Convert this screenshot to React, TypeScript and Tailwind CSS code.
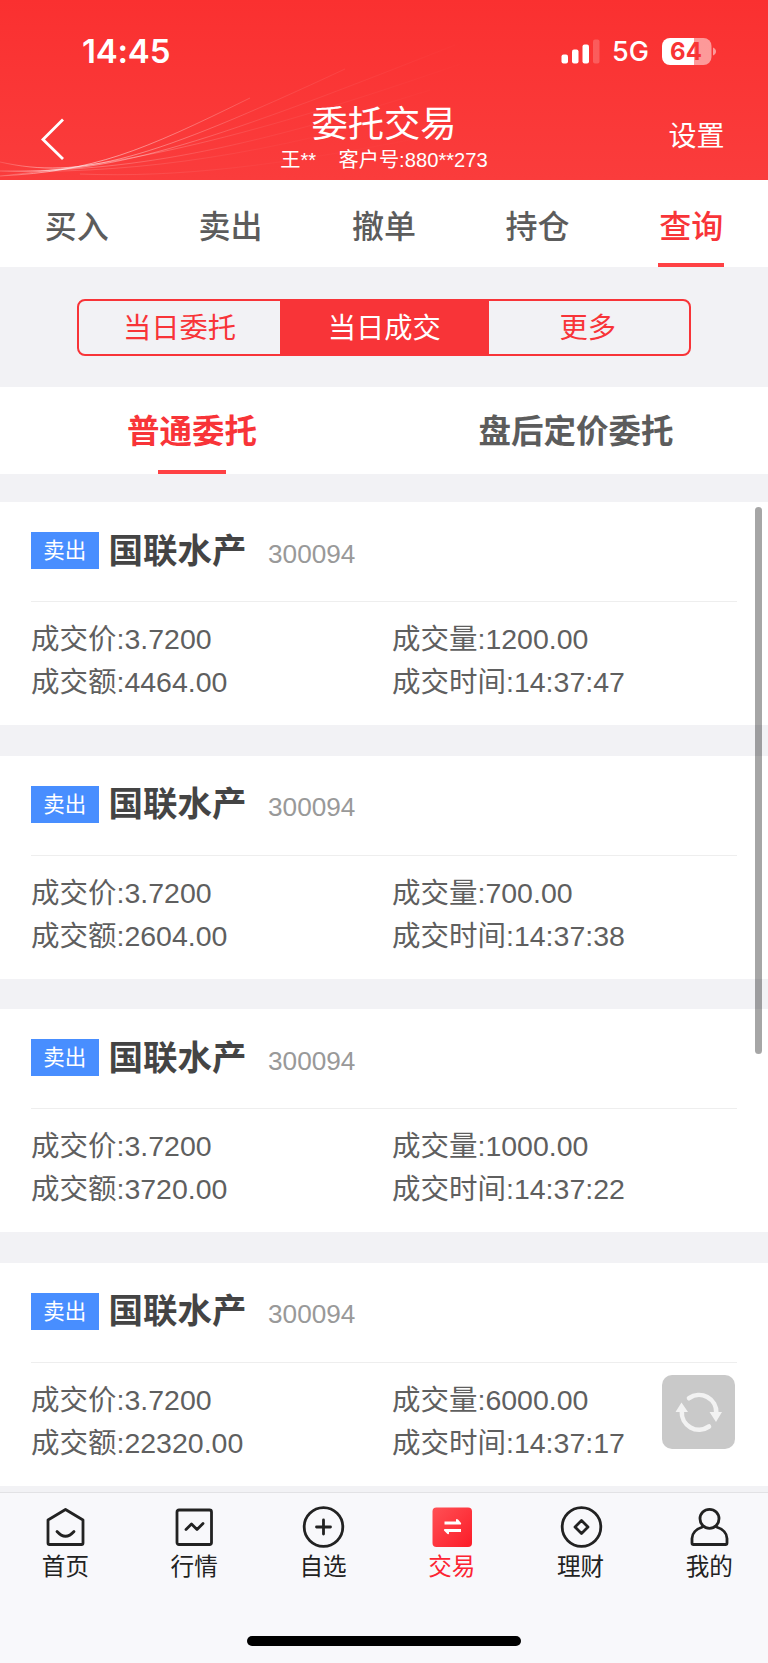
// App.tsx
import React from "react";

const tabs = ["买入", "卖出", "撤单", "持仓", "查询"];

const deals = [
  { price: "3.7200", volume: "1200.00", amount: "4464.00", time: "14:37:47" },
  { price: "3.7200", volume: "700.00", amount: "2604.00", time: "14:37:38" },
  { price: "3.7200", volume: "1000.00", amount: "3720.00", time: "14:37:22" },
  { price: "3.7200", volume: "6000.00", amount: "22320.00", time: "14:37:17" },
];

const StatusBar: React.FC = () => {
  return (
    <div className="h-[104px] pl-[82px] pr-[51px] flex items-center justify-between text-white font-[Inter,sans-serif]">
      <span className="-mt-px text-[33px] font-semibold leading-none tracking-[-0.2px]">14:45</span>
      <div className="-mt-px flex items-center">
        <svg className="w-[39px] h-[25px]" viewBox="0 0 39 25" fill="#fff">
          <rect x="0.5" y="15.5" width="6.5" height="9" rx="2" />
          <rect x="11" y="10.5" width="6.5" height="14" rx="2" />
          <rect x="21.5" y="5.5" width="6.5" height="19" rx="2" />
          <rect x="32" y="0.5" width="6.5" height="24" rx="2" fillOpacity="0.2" />
        </svg>
        <span className="ml-3 w-[38px] text-[27px] font-medium leading-[34px]">5G</span>
        <svg className="ml-[12px] w-[55px] h-[27px] overflow-visible" viewBox="0 0 55 27">
          <path d="M8 0h24v27H8a8 8 0 0 1-8-8V8a8 8 0 0 1 8-8z" fill="#fff" />
          <path d="M32 0h9.500a8 8 0 0 1 8 8v11a8 8 0 0 1-8 8H32z" fill="#fff" fillOpacity="0.5" />
          <path d="M51 9.500c4 1.500 4 6.500 0 8z" fill="#fff" fillOpacity="0.5" />
          <text x="24" y="22.300" textAnchor="middle" fontSize="24" fontWeight="700" fill="#f83434">64</text>
        </svg>
      </div>
    </div>
  );
};

const Header: React.FC = () => {
  return (
    <header className="relative h-[180px] bg-linear-to-b from-[#fa3030] to-[#fa3c3c] text-white">
      {/* Light trails behind the title */}
      <svg className="absolute left-0 top-0 w-[768px] h-[180px]" viewBox="0 0 768 180" fill="none">
        <defs>
          <linearGradient id="trail" gradientUnits="userSpaceOnUse" x1="0" y1="0" x2="480" y2="0">
            <stop offset="0" stopColor="#fff" stopOpacity="0.15" />
            <stop offset="0.12" stopColor="#fff" stopOpacity="0.6" />
            <stop offset="0.3" stopColor="#fff" stopOpacity="0.4" />
            <stop offset="0.55" stopColor="#fff" stopOpacity="0.12" />
            <stop offset="1" stopColor="#fff" stopOpacity="0" />
          </linearGradient>
        </defs>
        <g stroke="url(#trail)">
          <path d="M0 176C95 171 140 152 250 98" />
          <path d="M0 162C80 180 150 160 345 69" strokeOpacity="0.9" />
          <path d="M0 171C110 174 190 150 455 45" strokeOpacity="0.8" />
          <path d="M0 176C100 165 200 155 460 64" strokeOpacity="0.6" />
          <path d="M0 171C130 172 240 150 430 90" strokeOpacity="0.5" />
          <path d="M0 171C120 174 240 160 400 115" strokeOpacity="0.3" />
          <path d="M80 174C180 178 280 165 420 138" strokeOpacity="0.25" />
        </g>
      </svg>
      <div className="relative">
        <StatusBar />
        <div className="h-[76px] grid grid-cols-[1fr_auto_1fr]">
          <svg className="ml-[41px] mt-[14px] w-[24px] h-[42px]" viewBox="0 0 24 42" fill="none" stroke="#fff" strokeWidth="2.800">
            <path d="M22 1.500L2 21.500L22 41" />
          </svg>
          <div className="text-center whitespace-pre">
            <h1 className="mt-[1px] text-[36.300px] leading-[40px]">委托交易</h1>
            <p className="mt-[3px] text-[20.200px] leading-[24px]">王**    客户号:880**273</p>
          </div>
          <span className="justify-self-end mr-[43.500px] mt-[13px] text-[28px] leading-[40px]">设置</span>
        </div>
      </div>
    </header>
  );
};

const DealCard: React.FC<{ deal: (typeof deals)[number] }> = ({ deal }) => {
  return (
    <section className="h-[223px] bg-white px-[31px]">
      <div className="h-[99px] flex items-center">
        <span className="-mt-[2px] w-[67.500px] h-[37px] bg-[#488eff] text-white text-[21.500px] leading-[38px] text-center">卖出</span>
        <span className="ml-[10px] text-[34.500px] font-bold text-[#444]">国联水产</span>
        <span className="ml-[21.500px] mt-[6px] text-[26.200px] text-[#999]">300094</span>
      </div>
      <div className="border-t border-[#eee] pt-[16px] grid grid-cols-[361px_1fr] text-[28.500px] leading-[43px] text-[#5f5f5f]">
        <span>成交价:{deal.price}</span>
        <span>成交量:{deal.volume}</span>
        <span>成交额:{deal.amount}</span>
        <span>成交时间:{deal.time}</span>
      </div>
    </section>
  );
};

const stroke = { fill: "none", stroke: "#222", strokeWidth: 2.8, strokeLinecap: "round", strokeLinejoin: "round" } as const;

const navItems = [
  {
    label: "首页",
    icon: (
      <g {...stroke}>
        <path d="M22.500 3.500L40 14V37a1.500 1.500 0 0 1-1.500 1.500H6.500a1.500 1.500 0 0 1-1.500-1.500V14z" />
        <path d="M14 25.500Q22.500 35 31 25.500" />
      </g>
    ),
  },
  {
    label: "行情",
    icon: (
      <g {...stroke}>
        <rect x="5" y="4" width="34.500" height="34.500" rx="2" />
        <path d="M14 23.500L19.500 18L25 23.500L31 17.500" />
      </g>
    ),
  },
  {
    label: "自选",
    icon: (
      <g {...stroke}>
        <circle cx="22.500" cy="21" r="19.300" />
        <path d="M15.500 21H29.500M22.500 14V28" />
      </g>
    ),
  },
  {
    label: "交易",
    active: true,
    icon: (
      <g>
        <defs>
          <linearGradient id="trade" x1="0" y1="0" x2="1" y2="1">
            <stop offset="0" stopColor="#ff5055" />
            <stop offset="1" stopColor="#fc1c28" />
          </linearGradient>
        </defs>
        <rect x="2.500" y="1.500" width="39.500" height="39.500" rx="4" fill="url(#trade)" />
        <path
          d="M14.500 15.500H26V13.500Q26.500 12.500 28 13.500L31 17Q31.500 18.500 30 18.500H14.500zM31 23H15Q13 23.500 14.500 25L17.500 28Q19 28.500 19 27.500V26H31z"
          fill="#fff"
        />
      </g>
    ),
  },
  {
    label: "理财",
    icon: (
      <g {...stroke}>
        <circle cx="22.500" cy="21" r="19.300" />
        <path d="M22.500 14.500L29 21L22.500 27.500L16 21z" />
      </g>
    ),
  },
  {
    label: "我的",
    icon: (
      <g {...stroke}>
        <circle cx="22.500" cy="12.800" r="9.500" />
        <path d="M15.500 21C9 23 5 27.500 5 32.500V37a1.500 1.500 0 0 0 1.500 1.500H38.500a1.500 1.500 0 0 0 1.500-1.500V32.500C40 27.500 36 23 29.500 21" />
      </g>
    ),
  },
];

const App: React.FC = () => {
  return (
    <div className="relative w-[768px] h-[1663px] overflow-hidden bg-[#f2f2f5] font-['Liberation_Sans','Noto_Sans_CJK_SC',sans-serif]">
      <Header />

      {/* Main tabs */}
      <nav className="h-[87px] bg-white grid grid-cols-5 text-[32px] font-medium text-[#5c5c5c]">
        {tabs.map((tab) => (
          <div key={tab} className={tab === "查询" ? "flex flex-col items-center text-[#f83438]" : "flex flex-col items-center"}>
            <span className="h-[83px] leading-[95px]">{tab}</span>
            {tab === "查询" && <span className="w-[66px] h-[4px] bg-[#ff4144]" />}
          </div>
        ))}
      </nav>

      {/* Segmented filter */}
      <div className="h-[120px] px-[77px] pt-[32px]">
        <div className="h-[57px] grid grid-cols-[201px_208.500px_1fr] border-2 border-[#f83438] rounded-lg text-[28.300px] leading-[54px] text-center text-[#f83438]">
          <span>当日委托</span>
          <span className="h-[53px] bg-[#f83438] text-white">当日成交</span>
          <span className="pr-[2px]">更多</span>
        </div>
      </div>

      {/* Order type */}
      <div className="h-[87px] bg-white grid grid-cols-2 text-[32.500px] font-bold text-[#5c5c5c]">
        <div className="flex flex-col items-center text-[#f83438]">
          <span className="h-[83px] leading-[90px]">普通委托</span>
          <span className="w-[68px] h-[4px] bg-[#ff4144]" />
        </div>
        <div className="h-[87px] text-center leading-[90px]">盘后定价委托</div>
      </div>

      <main className="mt-[28px] flex flex-col gap-[30.500px]">
        {deals.map((deal) => (
          <DealCard key={deal.time} deal={deal} />
        ))}
      </main>

      {/* Scroll thumb */}
      <div className="absolute left-[755px] top-[507px] w-[7px] h-[547px] rounded-full bg-black/35" />

      {/* Refresh button */}
      <div className="absolute left-[662px] top-[1375px] w-[73px] h-[74px] rounded-[10px] bg-[#c9c9c9]">
        <svg className="w-[73px] h-[74px]" viewBox="0 0 73 74" fill="none" stroke="#f2f2f2" strokeWidth="4.600" strokeLinecap="round">
          <path d="M27 23.200A17.300 17.300 0 0 1 54.300 38" />
          <path d="M47 51.500A17.300 17.300 0 0 1 19.800 36" />
          <path d="M47.500 37H60L54 47zM13.500 37H26L19.500 27.500z" fill="#f2f2f2" stroke="none" />
        </svg>
      </div>

      {/* Bottom navigation */}
      <footer className="absolute left-0 bottom-0 w-[768px] h-[171px] bg-[#f8f8fb] border-t border-[#e2e2e5]">
        <div className="pl-[1px] pt-[13px] grid grid-cols-[repeat(6,128.800px)]">
          {navItems.map((item) => (
            <div key={item.label} className={item.active ? "flex flex-col items-center text-[#fc2432]" : "flex flex-col items-center text-[#222]"}>
              <svg className="w-[44px] h-[42px]" viewBox="0 0 44 42">{item.icon}</svg>
              <span className="mt-[2px] text-[23.600px] leading-[34px]">{item.label}</span>
            </div>
          ))}
        </div>
        <div className="mx-auto mt-[52px] w-[274px] h-[10px] rounded-full bg-black" />
      </footer>
    </div>
  );
};

export default App;
